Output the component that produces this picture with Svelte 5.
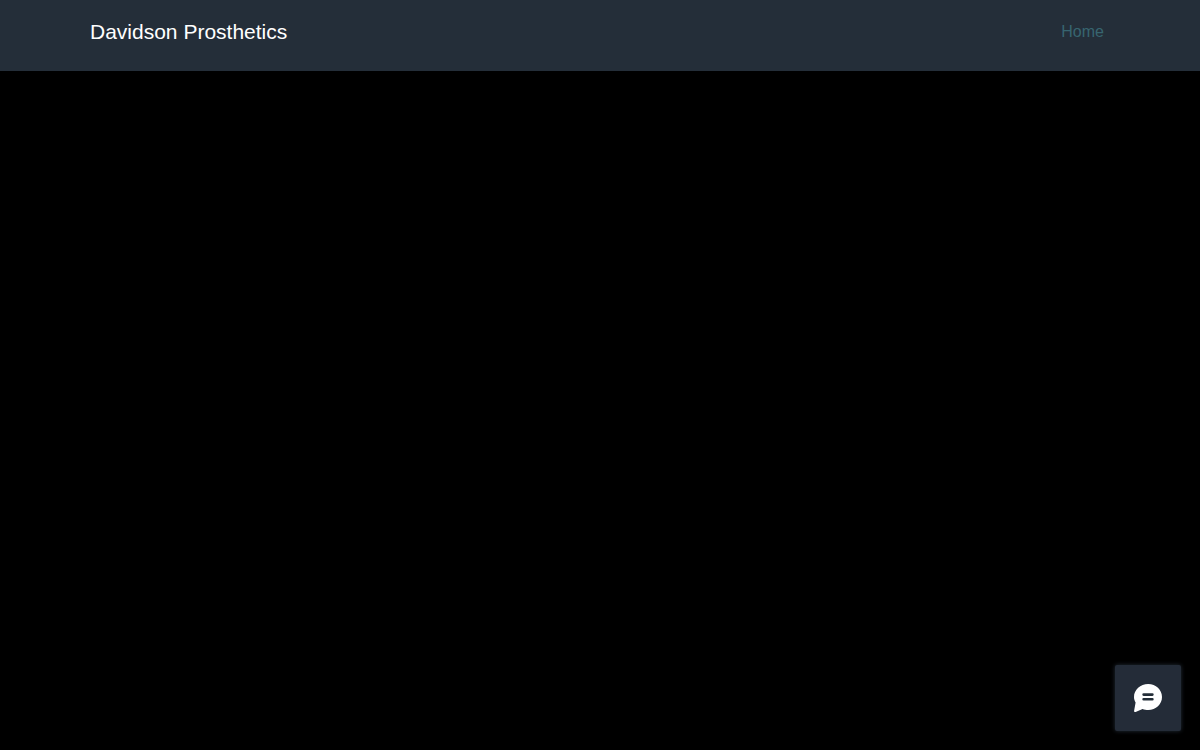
<script lang="ts">
	const brand = 'Davidson Prosthetics';
	const links = [{ label: 'Home', href: '#home' }];

	let chatOpen = $state(false);
</script>

<header class="site-header">
	<div class="bar">
		<a class="brand" href="#top">{brand}</a>
		<nav aria-label="Main">
			{#each links as link (link.href)}
				<a class="nav-link" href={link.href}>{link.label}</a>
			{/each}
		</nav>
	</div>
</header>

<button
	class="chat"
	aria-label="Chat"
	aria-pressed={chatOpen}
	onclick={() => {
		chatOpen = !chatOpen;
	}}
	type="button"
>
	<svg width="28" height="28" viewBox="0 0 28 28" aria-hidden="true">
		<path
			fill="#fff"
			d="M14.2 0C21.9 0 28 5.7 28 13S21.9 26 14.2 26c-2 0-3.9-.3-5.6-1.1L1.6 28C.6 28.3 0 27.6.1 26.7L1.6 18.4C.6 16.8 0 15 0 13 0 5.7 6.4 0 14.2 0Z"
		/>
		<path stroke="#242e39" stroke-linecap="round" stroke-width="2.6" d="M9.6 10.6h8.8M9.6 15.2h8.8" />
	</svg>
</button>

<style>
	:global(body) {
		background: #000;
		font-family: 'Liberation Sans', Arial, sans-serif;
		margin: 0;
	}

	.site-header {
		background: #242e39;
		padding: 20px 90px 27px;
	}

	.bar {
		align-items: center;
		display: flex;
		justify-content: space-between;
	}

	.brand {
		color: #fff;
		font-size: 21px;
		line-height: 24px;
		text-decoration: none;
	}

	nav {
		display: flex;
		gap: 12px;
		padding: 0 6px;
	}

	.nav-link {
		color: #376570;
		font-size: 16px;
		line-height: 24px;
		text-decoration: none;
	}

	.nav-link:hover {
		color: #fff;
	}

	.chat {
		align-items: center;
		background: #242c38;
		border: none;
		border-radius: 2px;
		bottom: 19px;
		box-shadow: 0 0 4px #242e39;
		cursor: pointer;
		display: flex;
		height: 66px;
		justify-content: center;
		padding: 0;
		position: fixed;
		right: 19px;
		width: 66px;
	}

	.chat:focus-visible {
		outline: 2px solid #fff;
		outline-offset: 1px;
	}
</style>
